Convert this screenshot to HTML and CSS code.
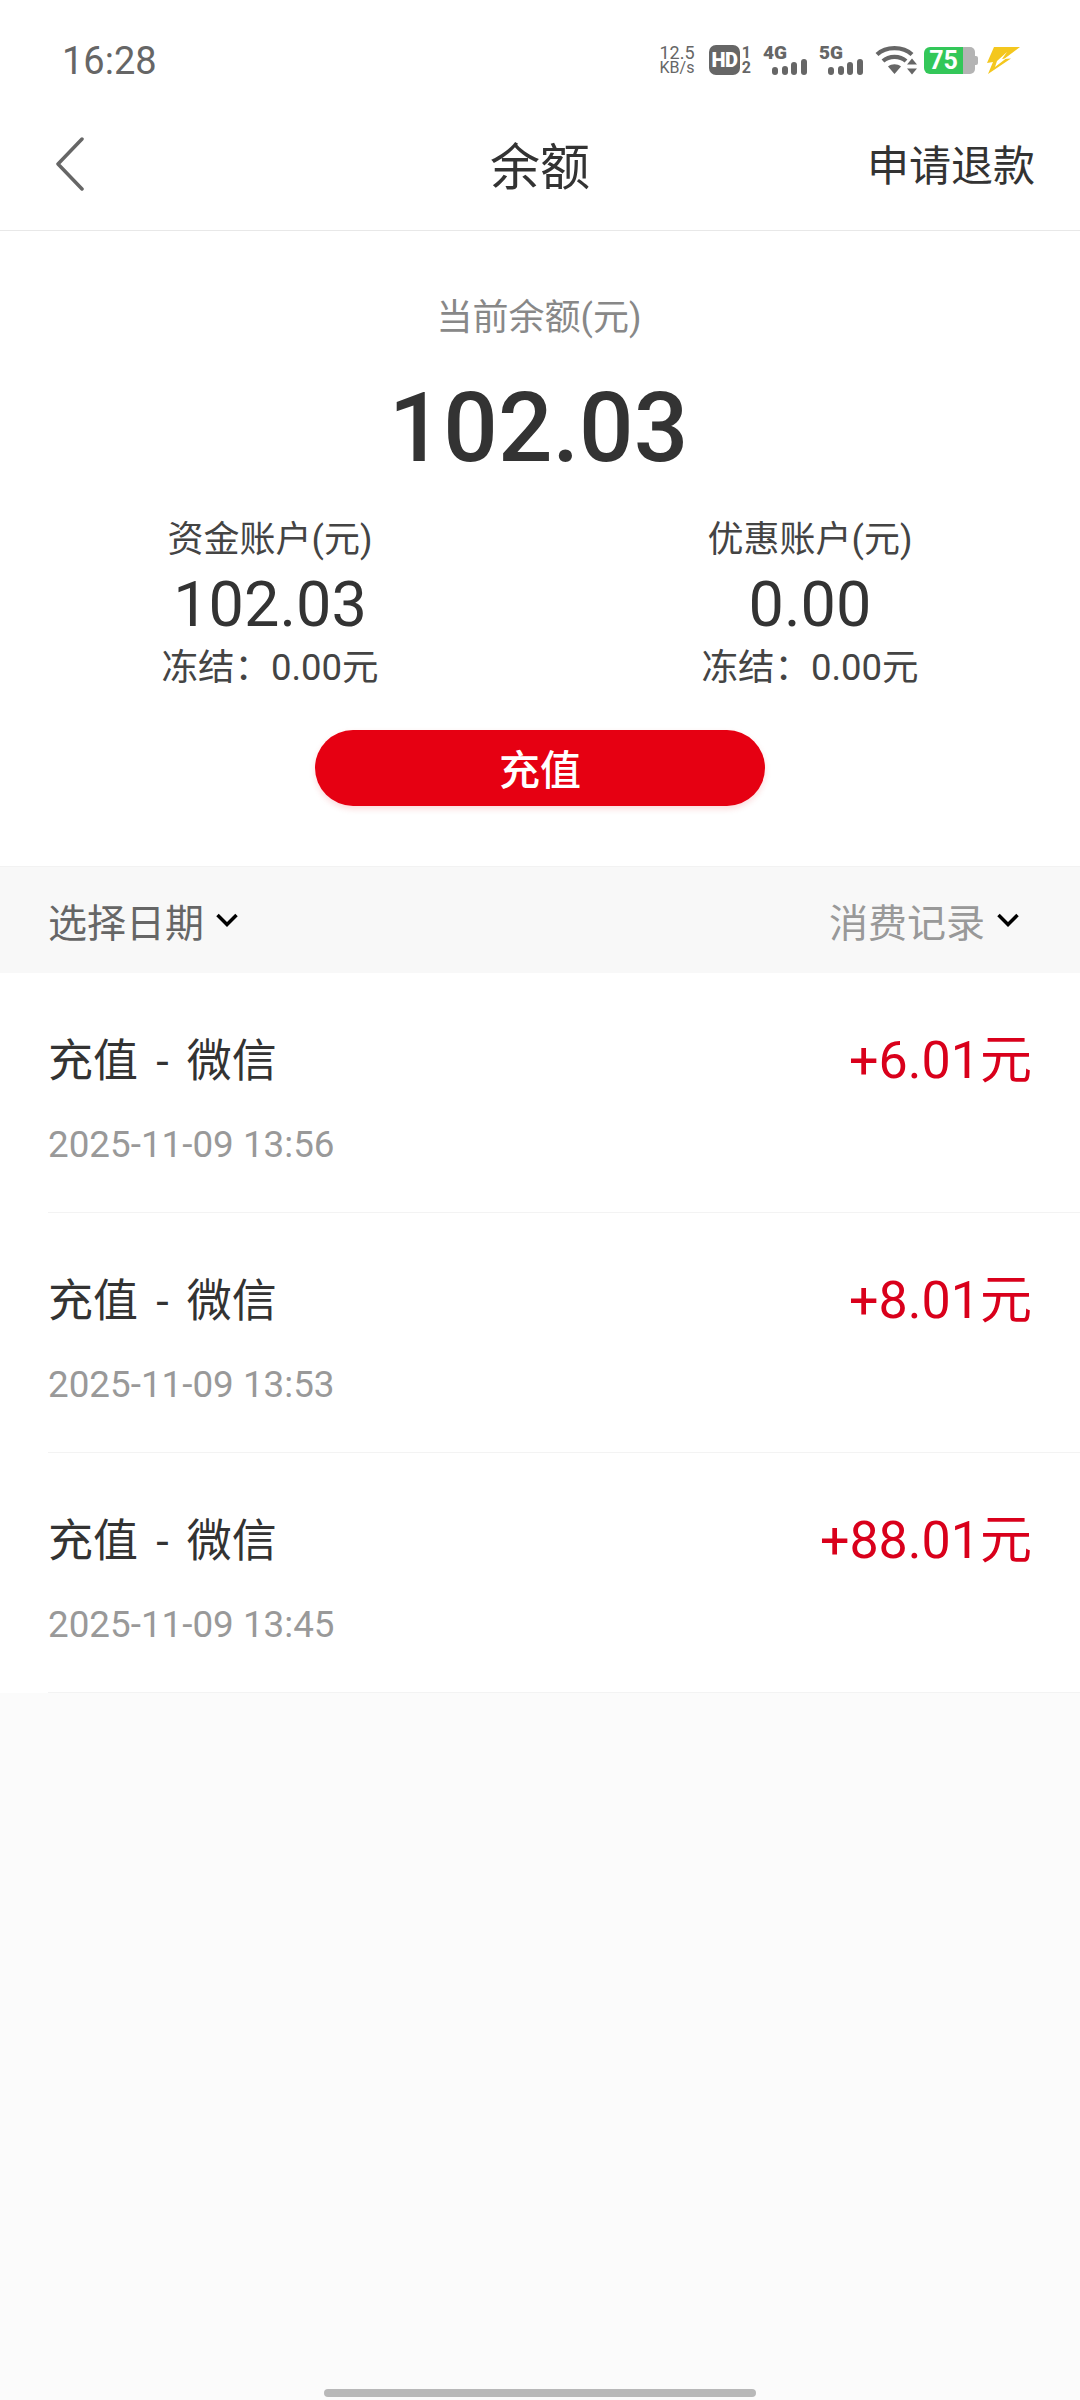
FILE: index.html
```html
<!DOCTYPE html>
<html lang="zh">
<head>
  <meta charset="UTF-8" />
  <meta name="viewport" content="width=device-width, initial-scale=1" />
  <title>余额</title>
  <link rel="stylesheet" href="styles.css">
</head>
<body>
  <div class="top">
    <div class="status">
      <span class="time">16:28</span>
      <div class="status-icons">
        <div class="net"><span>12.5</span><span>KB/s</span></div>
        <div class="hd">
          <span class="hd-box">HD</span>
          <span class="hd-sim"><span>1</span><span>2</span></span>
        </div>
        <div class="sig">
          <span class="sig-label">4G</span>
          <svg width="44" height="30" viewBox="0 0 44 30">
            <rect x="9" y="22" width="6" height="8" rx="3" fill="#666"/>
            <rect x="19" y="21" width="6" height="9" rx="3" fill="#666"/>
            <rect x="28" y="17" width="6" height="13" rx="3" fill="#666"/>
            <rect x="38" y="14" width="6" height="16" rx="3" fill="#666"/>
          </svg>
        </div>
        <div class="sig">
          <span class="sig-label">5G</span>
          <svg width="44" height="30" viewBox="0 0 44 30">
            <rect x="9" y="22" width="6" height="8" rx="3" fill="#666"/>
            <rect x="19" y="21" width="6" height="9" rx="3" fill="#666"/>
            <rect x="28" y="17" width="6" height="13" rx="3" fill="#666"/>
            <rect x="38" y="14" width="6" height="16" rx="3" fill="#666"/>
          </svg>
        </div>
        <svg class="ic-wifi" width="42" height="30" viewBox="0 0 42 30">
          <g fill="none" stroke="#666" stroke-width="4.200">
            <path d="M2 9.500C11 1 28 1 37 9.500"/>
            <path d="M8 16C14 10.500 25 10.500 31 16"/>
          </g>
          <path d="M13 21.500C16.500 18.500 22.500 18.500 26 21.500L19.500 29Z" fill="#666"/>
          <path d="M37 13.500L42 19.500H32Z" fill="#666"/>
          <path d="M37 29.500L42 23.500H32Z" fill="#666"/>
        </svg>
        <div class="batt">
          <span class="batt-level">75</span>
          <span class="batt-rest"></span>
          <span class="batt-tip"></span>
        </div>
        <svg class="ic-bolt" width="33" height="27" viewBox="0 0 33 27">
          <path d="M7 0H33L17 12L24 11.500L1 27L6 15L0 16Z" fill="#f4c71e"/>
          <path d="M10 14L20 5L15 12L19 11.500L8 20Z" fill="#fff"/>
        </svg>
      </div>
    </div>
    <div class="nav">
      <svg class="back" width="30" height="54" viewBox="0 0 30 54">
        <path d="M27 2L3 27L27 52" fill="none" stroke="#666" stroke-width="3.500" stroke-linecap="round" stroke-linejoin="round"/>
      </svg>
      <h1>余额</h1>
      <span class="refund">申请退款</span>
    </div>
  </div>

  <div class="summary">
    <div class="total-label">当前余额(元)</div>
    <div class="total">102.03</div>
    <div class="accounts">
      <div class="account">
        <div class="acc-label">资金账户(元)</div>
        <div class="acc-num">102.03</div>
        <div class="acc-frozen">冻结：0.00元</div>
      </div>
      <div class="account">
        <div class="acc-label">优惠账户(元)</div>
        <div class="acc-num">0.00</div>
        <div class="acc-frozen">冻结：0.00元</div>
      </div>
    </div>
    <div class="recharge">充值</div>
  </div>

  <div class="filters">
    <div class="filter">
      <span>选择日期</span>
      <svg width="22" height="14" viewBox="0 0 22 14"><path d="M1.500 2L11 11.500L20.500 2" fill="none" stroke="#000" stroke-width="3.500"/></svg>
    </div>
    <div class="filter filter-right">
      <span>消费记录</span>
      <svg width="22" height="14" viewBox="0 0 22 14"><path d="M1.500 2L11 11.500L20.500 2" fill="none" stroke="#000" stroke-width="3.500"/></svg>
    </div>
  </div>

  <div class="list">
    <div class="row">
      <div class="row-top"><span class="row-title">充值 - 微信</span><span class="amount">+6.01元</span></div>
      <div class="row-date">2025-11-09 13:56</div>
    </div>
    <div class="row">
      <div class="row-top"><span class="row-title">充值 - 微信</span><span class="amount">+8.01元</span></div>
      <div class="row-date">2025-11-09 13:53</div>
    </div>
    <div class="row">
      <div class="row-top"><span class="row-title">充值 - 微信</span><span class="amount">+88.01元</span></div>
      <div class="row-date">2025-11-09 13:45</div>
    </div>
  </div>

  <div class="spacer"></div>
  <div class="home-bar"></div>
</body>
</html>
```

FILE: styles.css
```css
* {
  box-sizing: border-box;
}

html, body {
  height: 100%;
}

body {
  margin: 0;
  background-color: #fbfbfb;
  font-family: Roboto, 'Noto Sans CJK SC', sans-serif;
  color: #333;
  display: flex;
  flex-direction: column;
}

.top {
  background: #fff;
  border-bottom: 1px solid #e8e8e8;
}

.status {
  height: 100px;
  padding: 20px 60px 0 62px;
  display: flex;
  justify-content: space-between;
  align-items: center;
}

.time {
  margin-top: 2px;
  font-size: 38px;
  color: #666;
}

.status-icons {
  display: flex;
  align-items: center;
  color: #666;
}

.net {
  width: 36px;
  display: flex;
  flex-direction: column;
  align-items: center;
  font-size: 18px;
  line-height: 15px;
}

.net span:last-child {
  font-size: 16px;
}

.hd {
  margin-left: 14px;
  width: 42px;
  height: 30px;
  display: flex;
  justify-content: space-between;
}

.hd-box {
  width: 31px;
  height: 30px;
  border-radius: 7px;
  background: #666;
  color: #fff;
  font-size: 20px;
  font-weight: 900;
  line-height: 30px;
  text-align: center;
  letter-spacing: -0.5px;
}

.hd-sim {
  display: flex;
  flex-direction: column;
  font-size: 16px;
  font-weight: 700;
  line-height: 15px;
}

.sig {
  margin-left: 12px;
  width: 44px;
  height: 30px;
  position: relative;
}

.sig svg {
  display: block;
}

.sig-label {
  position: absolute;
  left: 0;
  top: 0;
  font-size: 19px;
  font-weight: 900;
  line-height: 15px;
}

.ic-wifi {
  margin-left: 12px;
}

.batt {
  margin-left: 7px;
  display: flex;
  align-items: center;
}

.batt-level {
  width: 39px;
  height: 27px;
  border-radius: 6px 0 0 6px;
  background: #33c759;
  color: #fff;
  font-size: 25px;
  font-weight: 700;
  line-height: 27px;
  text-align: center;
}

.batt-rest {
  width: 12px;
  height: 27px;
  border-radius: 0 5px 5px 0;
  background: #b4b4b4;
}

.batt-tip {
  width: 3px;
  height: 9px;
  border-radius: 0 2px 2px 0;
  background: #b4b4b4;
}

.ic-bolt {
  margin-left: 9px;
}

.nav {
  height: 130px;
  padding: 0 45px 5px 55px;
  display: flex;
  align-items: center;
  justify-content: space-between;
  position: relative;
}

.nav .back {
  margin-top: 2px;
}

.nav h1 {
  position: absolute;
  left: 0;
  right: 0;
  margin: 0;
  text-align: center;
  font-size: 50px;
  font-weight: 400;
  color: #333;
}

.refund {
  font-size: 42px;
  color: #333;
}

.summary {
  background: #fff;
  padding: 62px 0 60px;
  text-align: center;
  height: 635px;
}

.total-label {
  padding-right: 2px;
  font-size: 36px;
  line-height: 50px;
  color: #888;
}

.total {
  margin-top: 30px;
  padding-right: 3px;
  font-size: 96px;
  line-height: 110px;
  font-weight: 500;
  color: #333;
}

.accounts {
  margin-top: 32px;
  display: flex;
}

.account {
  flex: 1;
}

.acc-label {
  font-size: 36px;
  line-height: 50px;
  color: #444;
}

.acc-num {
  margin-top: 5px;
  font-size: 63px;
  line-height: 70px;
  color: #333;
}

.acc-frozen {
  margin-top: 3px;
  font-size: 36.5px;
  line-height: 50px;
  color: #444;
}

.recharge {
  margin: 37px auto 0;
  width: 450px;
  height: 76px;
  line-height: 82px;
  border-radius: 38px;
  background: #e60012;
  color: #fff;
  font-size: 41px;
  font-weight: 500;
  box-shadow: 0 3px 6px rgba(230, 0, 18, 0.15);
  overflow: hidden;
}

.filters {
  height: 107px;
  background: #f8f8f8;
  border-top: 1px solid #f2f2f2;
  padding: 0 61px 0 48px;
  display: flex;
  justify-content: space-between;
  align-items: center;
}

.filter {
  display: flex;
  align-items: center;
  gap: 12px;
  font-size: 39px;
  color: #666;
}

.filter-right {
  color: #999;
}

.list {
  background: #fff;
}

.row {
  margin-left: 48px;
  height: 240px;
  padding: 54px 48px 0 0;
  border-bottom: 1px solid #f3f3f3;
}

.row-top {
  display: flex;
  justify-content: space-between;
  align-items: center;
  height: 60px;
}

.row-title {
  font-size: 45px;
  word-spacing: 7px;
  color: #333;
}

.amount {
  margin-bottom: 4px;
  font-size: 52px;
  color: #d9001b;
}

.row-date {
  margin-top: 33px;
  font-size: 36.8px;
  line-height: 50px;
  color: #999;
}

.spacer {
  flex: 1;
}

.home-bar {
  align-self: center;
  width: 432px;
  height: 8px;
  margin-bottom: 3px;
  border-radius: 4px;
  background: #b8b8b8;
}
```
